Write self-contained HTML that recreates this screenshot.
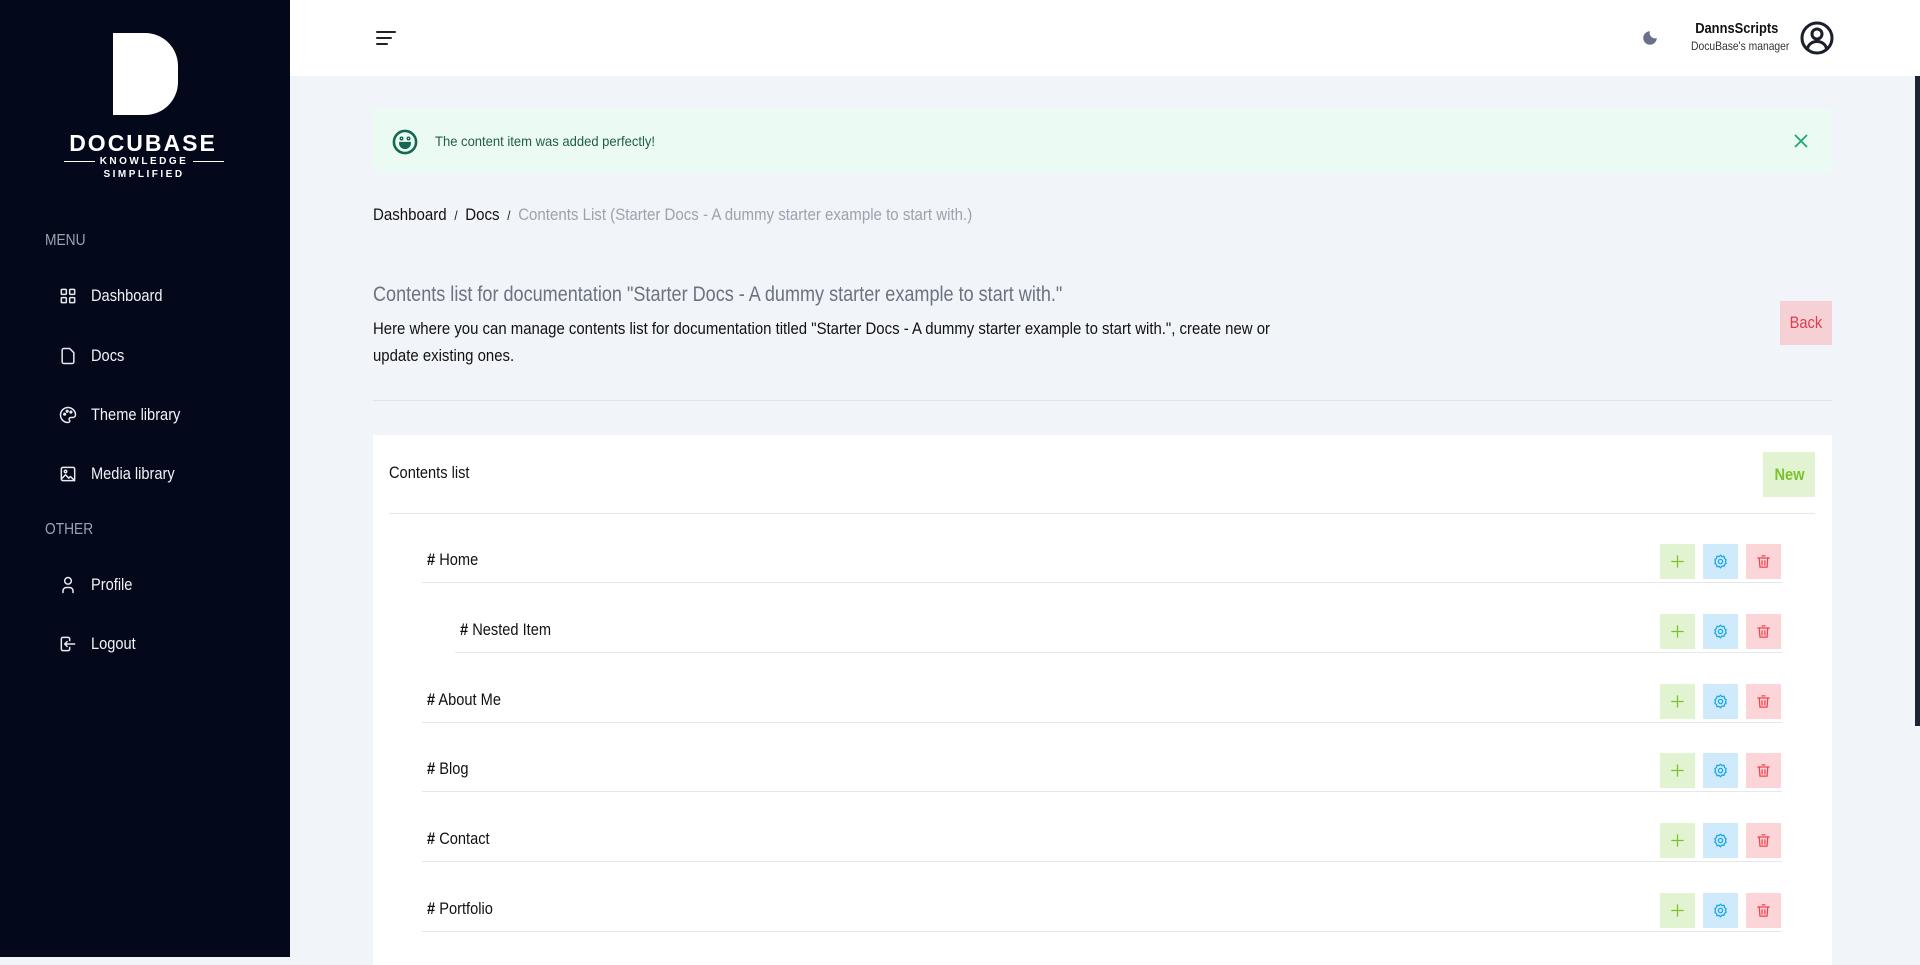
<!DOCTYPE html>
<html><head><meta charset="utf-8"><style>
*{box-sizing:border-box;margin:0;padding:0}
body{width:1920px;height:957px;overflow:hidden;background:#f1f4f8;font-family:"Liberation Sans",sans-serif;position:relative;color:#111}
.abs{position:absolute}
.n{display:inline-block;transform:scaleX(.86);transform-origin:left center;white-space:nowrap}
.nr{display:inline-block;transform:scaleX(.86);transform-origin:right center;white-space:nowrap}
#side{left:0;top:0;width:290px;height:957px;background:#03081a;color:#fff}
.nav{position:absolute;left:58px;display:flex;align-items:center;font-size:17px;color:#f1f3f7}
.nav svg{width:20px;height:20px;margin-right:13px;fill:none;stroke:#e8eaf0;stroke-width:1.8;stroke-linecap:round;stroke-linejoin:round}
.sec{position:absolute;left:45px;font-size:16px;color:#9ca3af}
#head{left:290px;top:0;width:1630px;height:76px;background:#fff}
.row{position:absolute;left:422px;width:1360px;height:70px;border-bottom:1.5px solid #e5e7eb}
.row span.t{position:absolute;top:37px;font-size:17px}
.btn{position:absolute;top:31px;width:35px;height:35px;display:flex;align-items:center;justify-content:center}
.btn svg{width:17px;height:17px;fill:none;stroke-width:1.8;stroke-linecap:round;stroke-linejoin:round}
.b1{left:1238px;background:#e2f3d1}.b1 svg{stroke:#7cc22c}
.b2{left:1281px;background:#cfeafb}.b2 svg{stroke:#1ba7e8}
.b3{left:1324px;background:#fbd5d7}.b3 svg{stroke:#ef4350}
</style></head><body>
<div id="side" class="abs">
  <div class="abs" style="left:113px;top:33px;width:65px;height:82px;background:#fff;border-radius:0 33px 33px 0"></div>
  <div class="abs" style="left:68px;top:130px;width:150px;text-align:center;font-weight:bold;font-size:23px;letter-spacing:2px">DOCUBASE</div>
  <div class="abs" style="left:64px;top:156px;width:160px;display:flex;align-items:center;font-size:10px;letter-spacing:2.5px;font-weight:bold"><span style="flex:1;height:1.5px;background:#fff"></span><span style="padding:0 5px">KNOWLEDGE</span><span style="flex:1;height:1.5px;background:#fff"></span></div>
  <div class="abs" style="left:64px;top:169px;width:160px;text-align:center;font-size:10px;letter-spacing:2.5px;font-weight:bold">SIMPLIFIED</div>
  <div class="sec" style="top:232px"><span class="n">MENU</span></div>
  <div class="nav" style="top:286px"><svg viewBox="0 0 24 24"><rect x="4" y="4" width="6" height="6" rx="1"/><rect x="14" y="4" width="6" height="6" rx="1"/><rect x="4" y="14" width="6" height="6" rx="1"/><rect x="14" y="14" width="6" height="6" rx="1"/></svg><span class="n">Dashboard</span></div>
  <div class="nav" style="top:346px"><svg viewBox="0 0 24 24"><path d="M14 3H7a2 2 0 0 0-2 2v14a2 2 0 0 0 2 2h10a2 2 0 0 0 2-2V8z"/></svg><span class="n">Docs</span></div>
  <div class="nav" style="top:405px"><svg viewBox="0 0 24 24"><path d="M12 21a9 9 0 1 1 9-9c0 2-2 3-4 3h-2a2 2 0 0 0-1 3.5c.5 1 0 2.5-2 2.5z"/><circle cx="8" cy="11" r="1"/><circle cx="11" cy="7.5" r="1"/><circle cx="15.5" cy="8.5" r="1"/></svg><span class="n">Theme library</span></div>
  <div class="nav" style="top:464px"><svg viewBox="0 0 24 24"><rect x="4" y="4" width="16" height="16" rx="2"/><circle cx="9" cy="9" r="1.5"/><path d="M4 18l5-5 4 4 2-2 5 5"/></svg><span class="n">Media library</span></div>
  <div class="sec" style="top:521px"><span class="n">OTHER</span></div>
  <div class="nav" style="top:575px"><svg viewBox="0 0 24 24"><circle cx="12" cy="7" r="4"/><path d="M6 21v-2a4 4 0 0 1 4-4h4a4 4 0 0 1 4 4v2"/></svg><span class="n">Profile</span></div>
  <div class="nav" style="top:634px"><svg viewBox="0 0 24 24"><path d="M14 8V6a2 2 0 0 0-2-2H6a2 2 0 0 0-2 2v12a2 2 0 0 0 2 2h6a2 2 0 0 0 2-2v-2"/><path d="M20 12H8l3-3M8 12l3 3"/></svg><span class="n">Logout</span></div>
</div>
<div id="head" class="abs">
  <svg class="abs" style="left:85px;top:29px" width="22" height="18" viewBox="0 0 22 18"><path d="M2 3h18M2 9h14M2 15h10" stroke="#222" stroke-width="2" stroke-linecap="round"/></svg>
  <svg class="abs" style="left:1351px;top:29px" width="18" height="18" viewBox="0 0 24 24"><path d="M12 3a7 7 0 0 0 9 9 9 9 0 1 1-9-9z" fill="#6b7089"/></svg>
  <div class="abs" style="right:131px;top:20px;text-align:right"><div class="nr" style="font-weight:bold;font-size:15px;display:block;margin-right:11px">DannsScripts</div><div class="nr" style="font-size:12px;color:#333;margin-top:2px;display:block">DocuBase's manager</div></div>
  <svg class="abs" style="left:1509px;top:20px" width="36" height="36" viewBox="0 0 36 36" fill="none" stroke="#1b1f2b" stroke-width="3"><circle cx="18" cy="18" r="15"/><circle cx="18" cy="14" r="5"/><path d="M8.5 29.5a9.5 8 0 0 1 19 0"/></svg>
</div>
<div class="abs" style="left:1915px;top:76px;width:5px;height:650px;background:#1e2433"></div>
<div class="abs" style="left:373px;top:108px;width:1459px;height:66px;background:#ebfbf4;border-radius:6px">
  <svg class="abs" style="left:18px;top:20px" width="28" height="28" viewBox="0 0 24 24" fill="none" stroke="#13684d" stroke-width="2.2" stroke-linecap="round"><circle cx="12" cy="12" r="9.5"/><path d="M8 13h8a4 4 0 0 1-8 0z" fill="#13684d"/><circle cx="9" cy="9" r=".6"/><circle cx="15" cy="9" r=".6"/></svg>
  <div class="abs" style="left:62px;top:25px;font-size:14px;color:#1f5e44"><span class="n" style="transform:scaleX(.93)">The content item was added perfectly!</span></div>
  <svg class="abs" style="left:1421px;top:26px" width="14" height="14" viewBox="0 0 14 14"><path d="M1 1l12 12M13 1L1 13" stroke="#1fa67a" stroke-width="1.8"/></svg>
</div>
<div class="abs" style="left:373px;top:205px;font-size:17px"><span class="n" style="transform:scaleX(.885)">Dashboard <span style="font-size:13px;margin:0 4px">/</span> Docs <span style="font-size:13px;margin:0 4px">/</span> <span style="color:#9ca3af">Contents List (Starter Docs - A dummy starter example to start with.)</span></span></div>
<div class="abs" style="left:373px;top:283px;font-size:21px;color:#6b7280"><span class="n">Contents list for documentation "Starter Docs - A dummy starter example to start with."</span></div>
<div class="abs" style="left:373px;top:316px;width:1010px;font-size:16.5px;line-height:27px;transform:scaleX(.905);transform-origin:left top">Here where you can manage contents list for documentation titled "Starter Docs - A dummy starter example to start with.", create new or update existing ones.</div>
<div class="abs" style="left:1780px;top:301px;width:52px;height:44px;background:#f5d0d4;color:#e23b4a;font-size:17px;display:flex;align-items:center;justify-content:center"><span class="n" style="transform-origin:center">Back</span></div>
<div class="abs" style="left:373px;top:400px;width:1459px;height:1px;background:#dfe2e8"></div>
<div class="abs" style="left:373px;top:435px;width:1459px;height:530px;background:#fff">
  <div class="abs" style="left:16px;top:28px;font-size:17px"><span class="n">Contents list</span></div>
  <div class="abs" style="left:1390px;top:17px;width:52px;height:45px;background:#e2f3d1;color:#7cc22c;font-weight:bold;font-size:17px;display:flex;align-items:center;justify-content:center"><span class="n" style="transform-origin:center">New</span></div>
  <div class="abs" style="left:16px;top:78px;width:1426px;height:1px;background:#e5e7eb"></div>
</div>
<div id="rows"></div>
<script>
var items=[["Home",0],["Nested Item",1],["About Me",0],["Blog",0],["Contact",0],["Portfolio",0]];
var h='';
var tops=[513,583,653,722,792,862];
var ic='<div class="btn b1"><svg viewBox="0 0 24 24"><path d="M12 4v16M4 12h16"/></svg></div><div class="btn b2"><svg viewBox="0 0 24 24"><circle cx="12" cy="12" r="3"/><path d="M12 3l2 2.2 3-.6.6 3L20 9.5l-1 2.5 1 2.5-2.4 1.4-.6 3-3-.6L12 21l-2-2.2-3 .6-.6-3L4 14.5 5 12 4 9.5l2.4-1.9.6-3 3 .6z"/></svg></div><div class="btn b3"><svg viewBox="0 0 24 24"><path d="M4 7h16M10 4h4M6 7l1 13h10l1-13M10 11v6M14 11v6"/></svg></div>';
items.forEach(function(it,i){var n=it[1];h+='<div class="row" style="top:'+tops[i]+'px;left:'+(422+n*33)+'px;width:'+(1360-n*33)+'px"><span class="t" style="left:5px"><span class="n"><b>#</b> '+it[0]+'</span></span><div style="position:absolute;left:'+(-n*33)+'px;top:0">'+ic+'</div></div>';});
document.getElementById('rows').innerHTML=h;
</script>
</body></html>
